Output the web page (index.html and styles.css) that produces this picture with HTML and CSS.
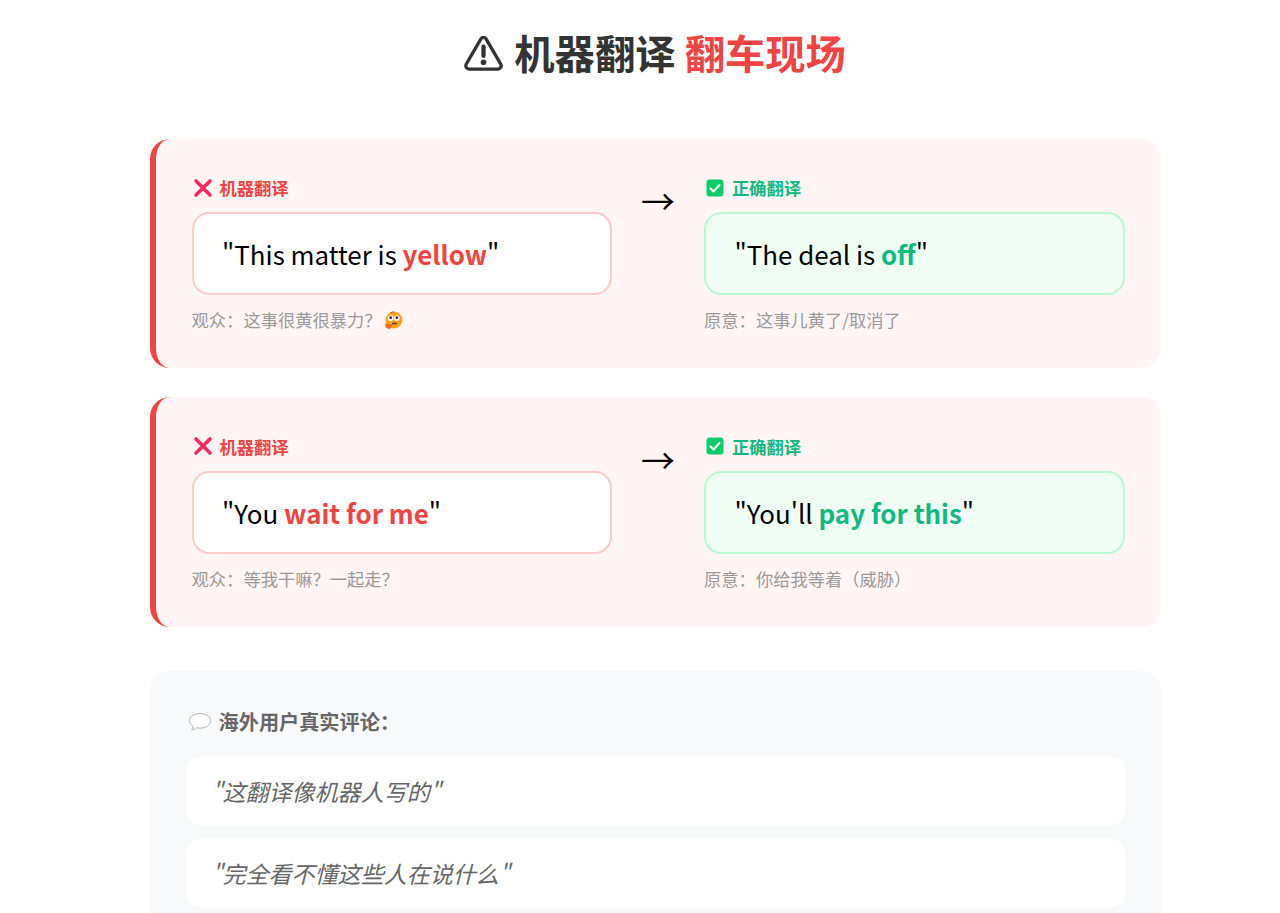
FILE: index.html
```html
<!DOCTYPE html>
<html lang="zh-CN">
<head>
<meta charset="utf-8">
<title>机器翻译翻车现场</title>
<link rel="stylesheet" href="styles.css">
</head>
<body>
<main class="page">
  <h1 class="title">
    <svg class="title-icon" viewBox="0 0 40 40" aria-hidden="true"><path d="M20 3.500c-1.100 0-2.100.6-2.800 1.700L2.400 30.800c-1.400 2.500.2 5.200 3 5.200h29.200c2.800 0 4.400-2.700 3-5.200L22.800 5.200C22.100 4.100 21.100 3.500 20 3.500z" fill="none" stroke="#333" stroke-width="3.400" stroke-linejoin="round"/><path d="M20 13v9.500" stroke="#333" stroke-width="4.400" stroke-linecap="round"/><circle cx="20" cy="29" r="2.900" fill="#333"/></svg>
    <span>机器翻译 <span class="title-accent">翻车现场</span></span>
  </h1>

  <section class="case">
    <div class="side">
      <div class="tag tag-bad"><svg class="tag-icon" viewBox="0 0 20 20"><path d="M3 3l14 14M17 3L3 17" stroke="#f4295d" stroke-width="3.600" stroke-linecap="round"/></svg>机器翻译</div>
      <div class="quote quote-bad">"This matter is <strong>yellow</strong>"</div>
      <p class="note">观众：这事很黄很暴力？<svg class="emoji" viewBox="0 0 20 20"><circle cx="10.500" cy="9.500" r="8.800" fill="#f9a11b"/><path d="M7 1.700q2-1 4-.6" stroke="#8a5a1a" stroke-width="1" fill="none"/><circle cx="7" cy="7.500" r="2.900" fill="#fff"/><circle cx="13.500" cy="7.500" r="2.900" fill="#fff"/><circle cx="7" cy="7" r="1.500" fill="#333"/><circle cx="13.500" cy="7" r="1.500" fill="#333"/><path d="M8.500 14q2.500-2.200 5 0" stroke="#5a3a1a" stroke-width="1.300" fill="none"/><path d="M1.500 13.500c2-1.200 4 .6 6.500.8 1 1.500 0 4-2.500 4.700-2.500 0-5-2.500-4-5.500z" fill="#f26a1b"/></svg></p>
    </div>
    <div class="arrow">→</div>
    <div class="side">
      <div class="tag tag-good"><svg class="tag-icon" viewBox="0 0 20 20"><rect x="1.500" y="1.500" width="17" height="17" rx="3" fill="#0ccb6b"/><path d="M5.500 10.500l3 3 6-6.500" stroke="#fff" stroke-width="2" fill="none" stroke-linecap="round" stroke-linejoin="round"/></svg>正确翻译</div>
      <div class="quote quote-good">"The deal is <strong>off</strong>"</div>
      <p class="note">原意：这事儿黄了/取消了</p>
    </div>
  </section>

  <section class="case">
    <div class="side">
      <div class="tag tag-bad"><svg class="tag-icon" viewBox="0 0 20 20"><path d="M3 3l14 14M17 3L3 17" stroke="#f4295d" stroke-width="3.600" stroke-linecap="round"/></svg>机器翻译</div>
      <div class="quote quote-bad">"You <strong>wait for me</strong>"</div>
      <p class="note">观众：等我干嘛？一起走？</p>
    </div>
    <div class="arrow">→</div>
    <div class="side">
      <div class="tag tag-good"><svg class="tag-icon" viewBox="0 0 20 20"><rect x="1.500" y="1.500" width="17" height="17" rx="3" fill="#0ccb6b"/><path d="M5.500 10.500l3 3 6-6.500" stroke="#fff" stroke-width="2" fill="none" stroke-linecap="round" stroke-linejoin="round"/></svg>正确翻译</div>
      <div class="quote quote-good">"You'll <strong>pay for this</strong>"</div>
      <p class="note">原意：你给我等着（威胁）</p>
    </div>
  </section>

  <section class="comments">
    <h2 class="comments-title"><svg class="bubble" viewBox="0 0 24 20"><path d="M12 1.500c5.800 0 10.500 3.200 10.500 7.300s-4.700 7.300-10.500 7.300c-1.200 0-2.400-.1-3.400-.4-1.200 1.200-3 2-5 2.200.8-.9 1.400-2 1.500-3.400C3 13 1.500 11 1.500 8.800 1.500 4.700 6.200 1.500 12 1.500z" fill="#fff" stroke="#b5b5b5" stroke-width="1"/></svg>海外用户真实评论：</h2>
    <div class="comment">"这翻译像机器人写的"</div>
    <div class="comment">"完全看不懂这些人在说什么"</div>
  </section>
</main>
</body>
</html>
```

FILE: styles.css
```css
* { box-sizing: border-box; }
html, body { margin: 0; padding: 0; background: #fff; }
body {
  font-family: "Noto Sans CJK SC", "Noto Sans", sans-serif;
  height: 913px;
  overflow: hidden;
}
.page {
  width: 1011px;
  margin: 0 0 0 149.600px;
  padding-top: 22px;
}
.title {
  display: flex;
  justify-content: center;
  align-items: center;
  gap: 11px;
  margin: 0 0 58px;
  font-size: 40.320px;
  line-height: 59px;
  font-weight: 700;
  color: #333;
}
.title-icon { width: 39px; height: 39px; flex: none; margin-top: 3px; }
.title-accent { color: #ef4444; }
.case {
  display: grid;
  grid-template-columns: 1fr auto 1fr;
  column-gap: 28px;
  align-items: start;
  height: 229.400px;
  margin-bottom: 28.800px;
  padding: 36.400px 36px 36px;
  background: #fff5f5;
  border-left: 6px solid #ef4444;
  border-radius: 20px;
}
.side { min-width: 0; }
.tag {
  display: flex;
  align-items: center;
  gap: 7px;
  height: 25px;
  padding-left: 1px;
  margin-bottom: 12px;
  font-size: 17.280px;
  font-weight: 700;
}
.tag-icon { width: 20px; height: 20px; flex: none; }
.tag-bad { color: #ef4444; }
.tag-good { color: #10b981; }
.quote {
  height: 83px;
  padding: 0 28.400px;
  white-space: pre-wrap;
  font-size: 25.920px;
  line-height: 79px;
  border-radius: 17.280px;
  border: 2px solid;
  color: #000;
}
.quote-bad { background: #fff; border-color: #fecaca; }
.quote-bad strong { color: #ef4444; }
.quote-good { background: #f0fdf4; border-color: #bbf7d0; }
.quote-good strong { color: #10b981; }
.note {
  display: flex;
  align-items: center;
  margin: 12px 0 0;
  font-size: 17.280px;
  line-height: 25px;
  color: #999;
}
.emoji { width: 19px; height: 19px; margin: 2px 0 0 2px; }
.arrow {
  width: 36px;
  text-align: center;
  font-size: 34px;
  line-height: 52px;
  color: #000;
}
.comments {
  margin-top: 44px;
  padding: 36px;
  height: 300px;
  background: #f8f9fa;
  border-radius: 20px;
}
.comments-title {
  display: flex;
  align-items: center;
  gap: 7px;
  margin: 0 0 20px;
  font-size: 20.160px;
  line-height: 30px;
  font-weight: 700;
  color: #666;
}
.bubble { width: 24px; height: 20px; flex: none; margin-left: 2px; }
.comment {
  height: 68px;
  margin-bottom: 14.400px;
  padding: 0 25.920px;
  display: flex;
  align-items: center;
  background: #fff;
  border-radius: 14.400px;
  font-size: 23.040px;
  font-style: italic;
  color: #666;
}
```
